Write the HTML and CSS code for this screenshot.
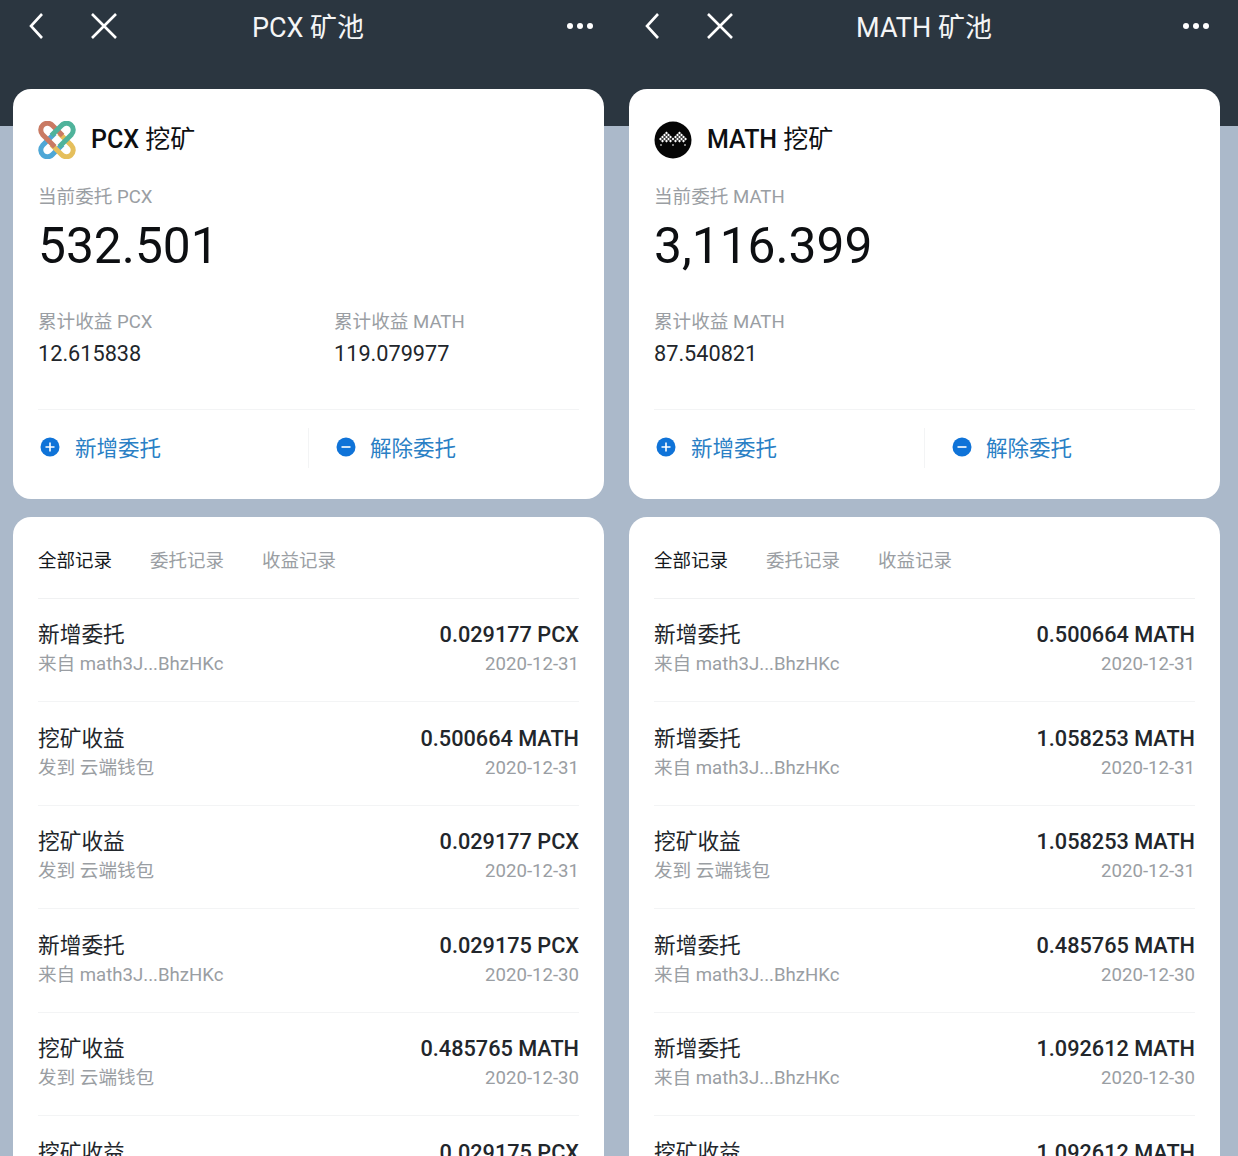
FILE: index.html
```html
<!DOCTYPE html>
<html>
<head>
    <meta charset="utf-8">
    <link rel="stylesheet" href="styles.css">
</head>
<body>
<div class="screens">
    <div class="panel">
        <div class="topbar">
            <svg class="nav-back" width="16" height="28" viewBox="0 0 16 28"><path d="M14 2 L3 14 L14 26" /></svg>
            <svg class="nav-close" width="28" height="28" viewBox="0 0 28 28"><path d="M2 2 L26 26 M26 2 L2 26" /></svg>
            <div class="topbar-title">PCX 矿池</div>
            <div class="dots"><span></span><span></span><span></span></div>
        </div>
        <div class="card summary">
            <div class="coin">
                <svg class="coin-logo" width="38" height="38" viewBox="2 2 34 34">
                    <path class="l-blue" d="M24 23 L15 32 A6 6 0 0 1 6 24 L17 13" />
                    <path class="l-yellow" d="M14 23 L23 32 A6 6 0 0 0 32 24 L21 13" />
                    <path class="l-red" d="M24 15 L15 6 A6 6 0 0 0 6 14 L17 25" />
                    <path class="l-green" d="M14 15 L23 6 A6 6 0 0 1 32 14 L21 25" />
                </svg>
                <span class="coin-name"><b>PCX</b> 挖矿</span>
            </div>
            <div class="label">当前委托 PCX</div>
            <div class="big-number">532.501</div>
            <div class="earnings">
                <div class="earning">
                    <div class="label">累计收益 PCX</div>
                    <div class="earning-value">12.615838</div>
                </div>
                <div class="earning">
                    <div class="label">累计收益 MATH</div>
                    <div class="earning-value">119.079977</div>
                </div>
            </div>
            <div class="actions">
                <div class="action">
                    <svg width="20" height="20" viewBox="0 0 20 20"><circle cx="10" cy="10" r="9.5" fill="#0f73d8"/><path d="M5.5 10 H14.5 M10 5.5 V14.5" stroke="#fff" stroke-width="1.6"/></svg>
                    <span>新增委托</span>
                </div>
                <div class="action">
                    <svg width="20" height="20" viewBox="0 0 20 20"><circle cx="10" cy="10" r="9.5" fill="#0f73d8"/><path d="M5.5 10 H14.5" stroke="#fff" stroke-width="1.6"/></svg>
                    <span>解除委托</span>
                </div>
            </div>
        </div>
        <div class="card records">
            <div class="tabs">
                <span class="tab active">全部记录</span>
                <span class="tab">委托记录</span>
                <span class="tab">收益记录</span>
            </div>
            <div class="row"><div><div class="row-title">新增委托</div><div class="row-sub">来自 math3J...BhzHKc</div></div><div class="row-right"><div class="amount">0.029177 PCX</div><div class="row-sub">2020-12-31</div></div></div>
            <div class="row"><div><div class="row-title">挖矿收益</div><div class="row-sub">发到 云端钱包</div></div><div class="row-right"><div class="amount">0.500664 MATH</div><div class="row-sub">2020-12-31</div></div></div>
            <div class="row"><div><div class="row-title">挖矿收益</div><div class="row-sub">发到 云端钱包</div></div><div class="row-right"><div class="amount">0.029177 PCX</div><div class="row-sub">2020-12-31</div></div></div>
            <div class="row"><div><div class="row-title">新增委托</div><div class="row-sub">来自 math3J...BhzHKc</div></div><div class="row-right"><div class="amount">0.029175 PCX</div><div class="row-sub">2020-12-30</div></div></div>
            <div class="row"><div><div class="row-title">挖矿收益</div><div class="row-sub">发到 云端钱包</div></div><div class="row-right"><div class="amount">0.485765 MATH</div><div class="row-sub">2020-12-30</div></div></div>
            <div class="row"><div><div class="row-title">挖矿收益</div><div class="row-sub">发到 云端钱包</div></div><div class="row-right"><div class="amount">0.029175 PCX</div><div class="row-sub">2020-12-30</div></div></div>
        </div>
    </div>

    <div class="panel">
        <div class="topbar">
            <svg class="nav-back" width="16" height="28" viewBox="0 0 16 28"><path d="M14 2 L3 14 L14 26" /></svg>
            <svg class="nav-close" width="28" height="28" viewBox="0 0 28 28"><path d="M2 2 L26 26 M26 2 L2 26" /></svg>
            <div class="topbar-title">MATH 矿池</div>
            <div class="dots"><span></span><span></span><span></span></div>
        </div>
        <div class="card summary">
            <div class="coin">
                <svg class="coin-logo" width="38" height="38" viewBox="0 0 38 38">
                    <circle cx="19" cy="19" r="18.500" fill="#050505"/>
                    <path fill="#fff" d="M12.500 10.500l1.500 1.500-1.500 1.500-1.500-1.500zM25.500 10.500l1.500 1.500-1.500 1.500-1.500-1.500zM10.500 12.500l1.500 1.500-1.500 1.500-1.500-1.500zM14.500 12.500l1.500 1.500-1.500 1.500-1.500-1.500zM23.500 12.500l1.500 1.500-1.500 1.500-1.500-1.500zM27.500 12.500l1.500 1.500-1.500 1.500-1.500-1.500zM8.500 14.500l1.500 1.500-1.500 1.500-1.500-1.500zM12.500 14.500l1.500 1.500-1.500 1.500-1.500-1.500zM16.500 14.500l1.500 1.500-1.500 1.500-1.500-1.500zM21.500 14.500l1.500 1.500-1.500 1.500-1.500-1.500zM25.500 14.500l1.500 1.500-1.500 1.500-1.500-1.500zM29.500 14.500l1.500 1.500-1.500 1.500-1.500-1.500zM6.500 16.500l1.500 1.500-1.500 1.500-1.500-1.500zM10.500 16.500l1.500 1.500-1.500 1.500-1.500-1.500zM14.500 16.500l1.500 1.500-1.500 1.500-1.500-1.500zM19 16.500l1.500 1.500-1.500 1.500-1.500-1.500zM23.500 16.500l1.500 1.500-1.500 1.500-1.500-1.500zM27.500 16.500l1.500 1.500-1.500 1.500-1.500-1.500zM31.500 16.500l1.500 1.500-1.500 1.500-1.500-1.500zM8.500 18.500l1.500 1.500-1.500 1.500-1.500-1.500zM12.500 18.500l1.500 1.500-1.500 1.500-1.500-1.500zM16.500 18.500l1.500 1.500-1.500 1.500-1.500-1.500zM21.500 18.500l1.500 1.500-1.500 1.500-1.500-1.500zM25.500 18.500l1.500 1.500-1.500 1.500-1.500-1.500zM29.500 18.500l1.500 1.500-1.500 1.500-1.500-1.500zM7 23l1 1-1 1-1-1zM19 23l1 1-1 1-1-1zM31 23l1 1-1 1-1-1z"/>
                </svg>
                <span class="coin-name"><b>MATH</b> 挖矿</span>
            </div>
            <div class="label">当前委托 MATH</div>
            <div class="big-number">3,116.399</div>
            <div class="earnings">
                <div class="earning">
                    <div class="label">累计收益 MATH</div>
                    <div class="earning-value">87.540821</div>
                </div>
            </div>
            <div class="actions">
                <div class="action">
                    <svg width="20" height="20" viewBox="0 0 20 20"><circle cx="10" cy="10" r="9.5" fill="#0f73d8"/><path d="M5.5 10 H14.5 M10 5.5 V14.5" stroke="#fff" stroke-width="1.6"/></svg>
                    <span>新增委托</span>
                </div>
                <div class="action">
                    <svg width="20" height="20" viewBox="0 0 20 20"><circle cx="10" cy="10" r="9.5" fill="#0f73d8"/><path d="M5.5 10 H14.5" stroke="#fff" stroke-width="1.6"/></svg>
                    <span>解除委托</span>
                </div>
            </div>
        </div>
        <div class="card records">
            <div class="tabs">
                <span class="tab active">全部记录</span>
                <span class="tab">委托记录</span>
                <span class="tab">收益记录</span>
            </div>
            <div class="row"><div><div class="row-title">新增委托</div><div class="row-sub">来自 math3J...BhzHKc</div></div><div class="row-right"><div class="amount">0.500664 MATH</div><div class="row-sub">2020-12-31</div></div></div>
            <div class="row"><div><div class="row-title">新增委托</div><div class="row-sub">来自 math3J...BhzHKc</div></div><div class="row-right"><div class="amount">1.058253 MATH</div><div class="row-sub">2020-12-31</div></div></div>
            <div class="row"><div><div class="row-title">挖矿收益</div><div class="row-sub">发到 云端钱包</div></div><div class="row-right"><div class="amount">1.058253 MATH</div><div class="row-sub">2020-12-31</div></div></div>
            <div class="row"><div><div class="row-title">新增委托</div><div class="row-sub">来自 math3J...BhzHKc</div></div><div class="row-right"><div class="amount">0.485765 MATH</div><div class="row-sub">2020-12-30</div></div></div>
            <div class="row"><div><div class="row-title">新增委托</div><div class="row-sub">来自 math3J...BhzHKc</div></div><div class="row-right"><div class="amount">1.092612 MATH</div><div class="row-sub">2020-12-30</div></div></div>
            <div class="row"><div><div class="row-title">挖矿收益</div><div class="row-sub">发到 云端钱包</div></div><div class="row-right"><div class="amount">1.092612 MATH</div><div class="row-sub">2020-12-30</div></div></div>
        </div>
    </div>
</div>
</body>
</html>
```

FILE: styles.css
```css
html, body {
    margin: 0;
    height: 1156px;
    overflow: hidden;
}

body {
    font-family: Roboto, "Noto Sans CJK SC", sans-serif;
    color: #14181c;
}

.screens {
    display: grid;
    grid-template-columns: 616px 622px;
    height: 1156px;
    overflow: hidden;
}

.panel {
    height: 1156px;
    overflow: hidden;
    background: linear-gradient(#2b3640 126px, #abb9ca 126px);
}

.topbar {
    display: flex;
    align-items: flex-start;
    width: 616px;
    height: 89px;
    padding: 12px 23px 0 28px;
    box-sizing: border-box;
    position: relative;
    color: #fff;
}

.topbar svg {
    fill: none;
    stroke: #fff;
    stroke-width: 2.6;
}

.nav-close {
    margin-left: 46px;
}

.topbar-title {
    position: absolute;
    left: 0;
    width: 616px;
    top: 9px;
    text-align: center;
    font-size: 27px;
    line-height: 38px;
    color: #f4f5f6;
}

.dots {
    display: flex;
    gap: 4px;
    margin-left: auto;
    margin-top: 11px;
}

.dots span {
    width: 6px;
    height: 6px;
    border-radius: 50%;
    background: #fff;
}

.card {
    background: #fff;
    width: 591px;
    margin-left: 13px;
    border-radius: 18px;
    box-sizing: border-box;
    padding: 0 25px;
}

.summary {
    height: 410px;
    padding-top: 31px;
    margin-bottom: 18px;
}

.coin {
    display: flex;
    align-items: center;
    gap: 15px;
    height: 38px;
    margin-top: 1px;
}

.coin-logo {
    flex: none;
}

.l-red, .l-green, .l-blue, .l-yellow {
    fill: none;
    stroke-width: 4.500;
}

.l-red { stroke: #c97a63; }
.l-green { stroke: #4fb39b; }
.l-blue { stroke: #4ea7d6; }
.l-yellow { stroke: #e5bf5c; }

.coin-name {
    font-size: 25px;
    line-height: 34px;
    margin-top: -1px;
    color: #0d0f12;
}

.coin-name b {
    font-weight: 500;
}

.label {
    font-size: 18.600px;
    line-height: 26px;
    color: #9a9ea3;
}

.summary > .label {
    margin-top: 25px;
}

.big-number {
    font-size: 49.700px;
    line-height: 60px;
    margin-top: 6px;
    color: #0d0f12;
}

.earnings {
    display: flex;
    margin-top: 33px;
}

.earning {
    flex: none;
    width: 296px;
}

.earning-value {
    font-size: 21.700px;
    line-height: 30px;
    margin-top: 4px;
    color: #22262b;
}

.actions {
    display: flex;
    margin-top: 40px;
    height: 74px;
    border-top: 1px solid #f3f4f5;
    box-sizing: border-box;
}

.action {
    display: flex;
    align-items: center;
    gap: 15px;
    flex: none;
    width: 270px;
    padding-left: 2px;
    box-sizing: border-box;
    color: #2a80c5;
    font-size: 21.500px;
    position: relative;
}

.action + .action {
    padding-left: 28px;
    gap: 14px;
}

.action + .action::before {
    content: "";
    position: absolute;
    left: 0;
    top: 18px;
    height: 40px;
    border-left: 1px solid #f3f4f5;
}

.records {
    height: 700px;
}

.tabs {
    display: flex;
    gap: 38px;
    height: 81.500px;
    padding-top: 3px;
    align-items: center;
    border-bottom: 1px solid #f0f1f2;
    box-sizing: border-box;
    font-size: 18.500px;
    color: #9a9ea3;
}

.tab.active {
    color: #14181c;
}

.row {
    display: flex;
    justify-content: space-between;
    height: 103.600px;
    padding-top: 20.500px;
    border-bottom: 1px solid #f3f4f5;
    box-sizing: border-box;
}

.row-title {
    font-size: 21.700px;
    line-height: 32px;
    color: #22262b;
}

.row-sub {
    font-size: 18.600px;
    line-height: 24px;
    margin-top: 1px;
    color: #9a9ea3;
}

.row-right {
    text-align: right;
}

.amount {
    font-size: 21.700px;
    line-height: 32px;
    font-weight: 500;
    color: #22262b;
}
```
